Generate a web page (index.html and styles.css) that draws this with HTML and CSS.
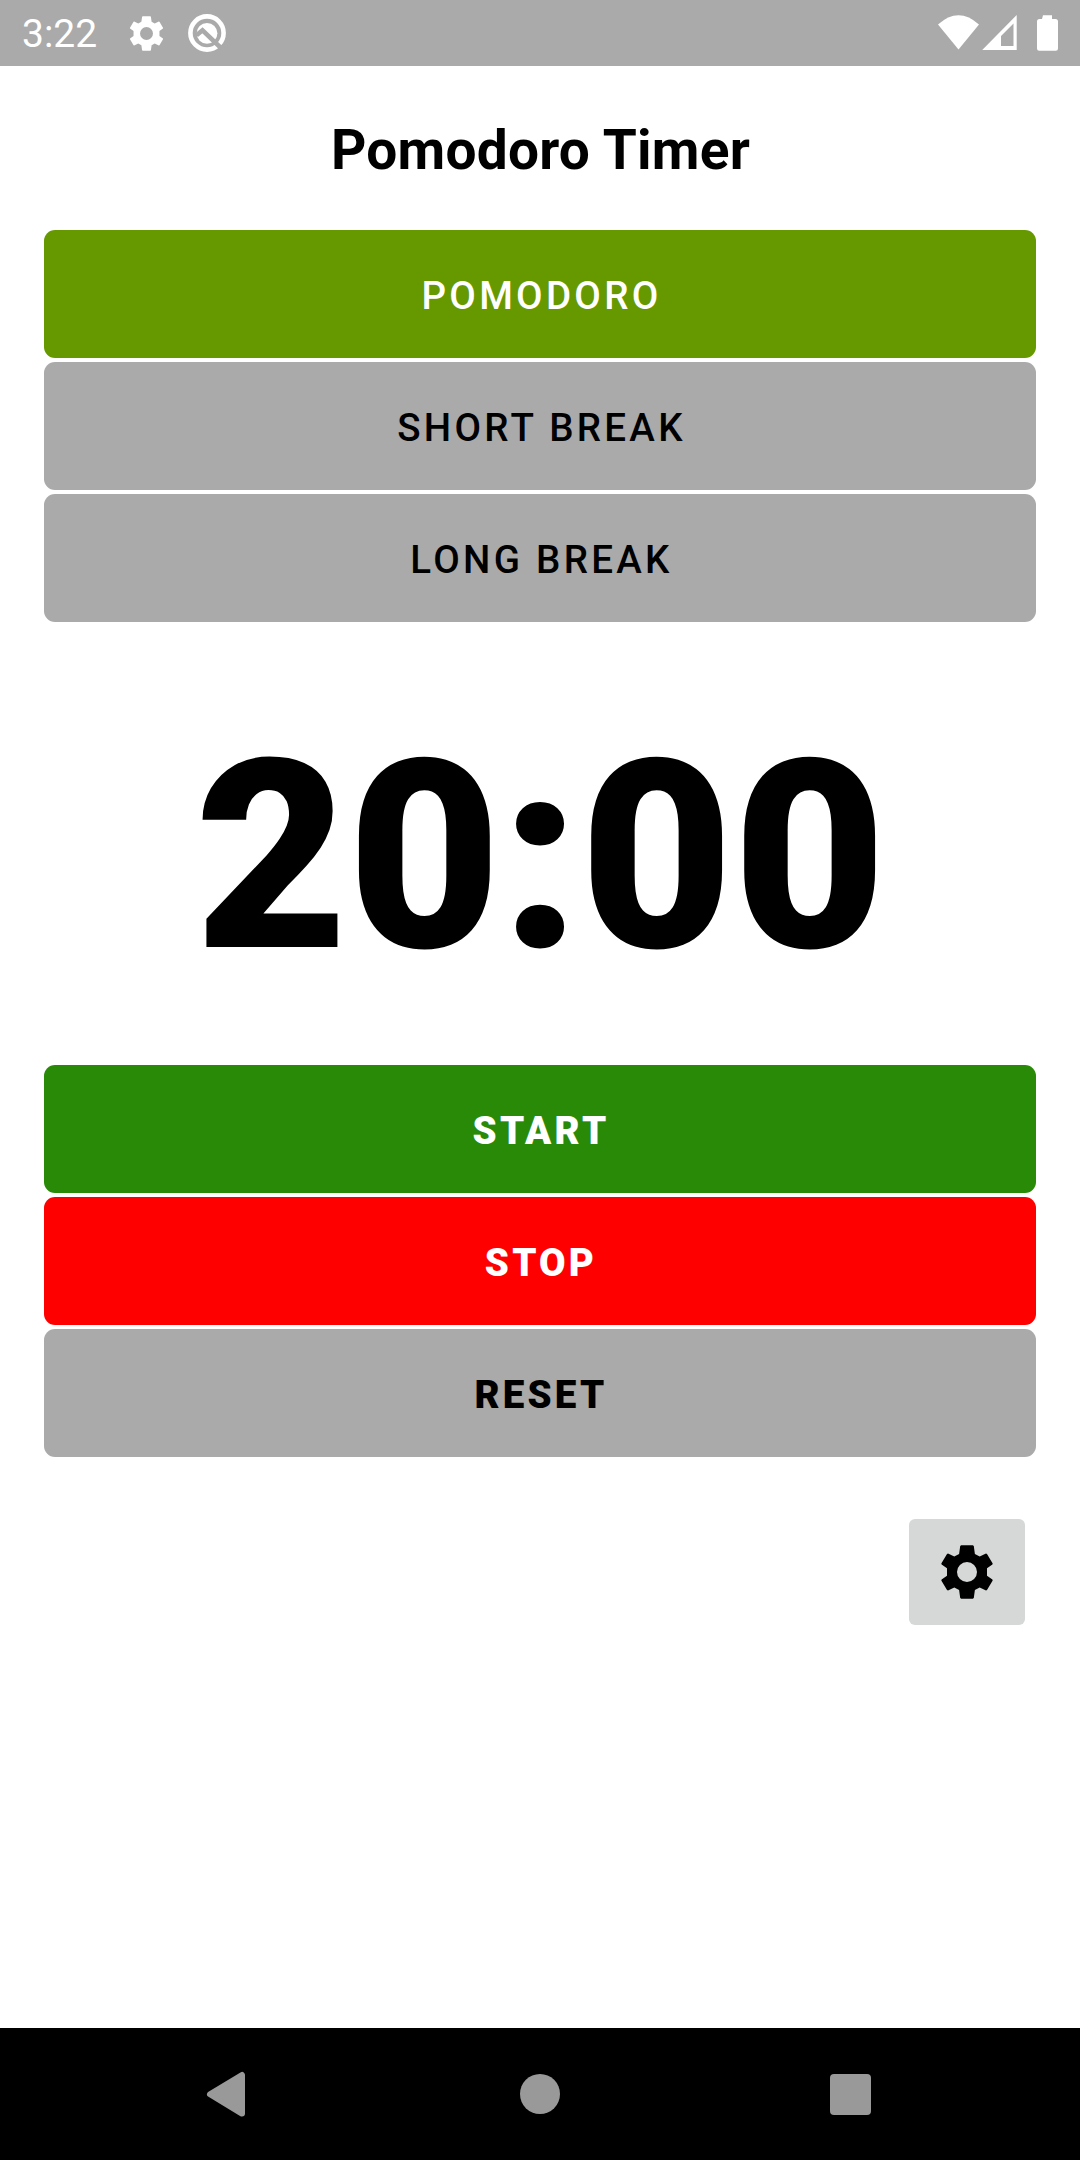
FILE: index.html
```html
<!DOCTYPE html>
<html lang="en">
<head>
<meta charset="utf-8">
<title>Pomodoro Timer</title>
<link rel="stylesheet" href="styles.css">
</head>
<body>
<svg class="defs" aria-hidden="true">
  <symbol id="gear" viewBox="-27 -27 54 54"><path fill-rule="evenodd" d="M-5.8-26.8H5.8L6.8-26 7.9-18 12.7-15.6 19-18.6 20-18 25.7-8.5 25.4-7.6 20-3.8V3.8L25.4 7.6 25.7 8.5 20 18 19 18.6 12.7 15.6 7.9 18 6.8 26 5.8 26.8H-5.8L-6.8 26-7.9 18-12.7 15.6-19 18.6-20 18-25.7 8.5-25.4 7.6-20 3.8V-3.8L-25.4-7.6-25.7-8.5-20-18-19-18.6-12.7-15.6-7.9-18-6.8-26zM10 0A10 10 0 1 0-10 0A10 10 0 1 0 10 0z"/></symbol>
</svg>
<header class="status">
  <span class="clock">3:22</span>
  <svg class="s-gear"><use href="#gear"/></svg>
  <svg class="s-app" viewBox="0 0 38 38"><circle class="ring" cx="19" cy="19" r="16.6"/><circle cx="19" cy="19.3" r="10.4"/><path class="cut" d="M8.500 21.300L14.500 16.300L33 34"/></svg>
  <svg class="s-right" viewBox="936 12 124 42"><path d="M938 24.5Q958.500 6 979 24.500L958.500 49.500z"/><path fill-rule="evenodd" d="M1016.700 15v35h-34.500zM1013.500 23.500L1001 36V46h12.500z"/><path d="M1043 15.300h9v3.700h3.500q2.500 0 2.500 2.500v27q0 2.200-2.200 2.200h-16.600q-2.200 0-2.200-2.200v-27q0-2.500 2.500-2.500h2.500z"/></svg>
</header>
<main class="screen">
  <h1 class="title">Pomodoro Timer</h1>
  <div class="group modes">
    <button class="btn active">POMODORO</button>
    <button class="btn">SHORT BREAK</button>
    <button class="btn">LONG BREAK</button>
  </div>
  <div class="time">20:00</div>
  <div class="group controls">
    <button class="btn start">START</button>
    <button class="btn stop">STOP</button>
    <button class="btn">RESET</button>
  </div>
  <button class="settings" aria-label="Settings"><svg><use href="#gear"/></svg></button>
</main>
<nav class="nav">
  <svg viewBox="-22 -22 44 44"><path class="back" d="M-20 .3L12-19V19.600z"/></svg>
  <svg viewBox="-22 -22 44 44"><circle r="20"/></svg>
  <svg viewBox="-22 -22 44 44"><rect x="-20" y="-20" width="41" height="41" rx="4"/></svg>
</nav>
</body>
</html>
```
FILE: styles.css
```css
*{box-sizing:border-box}
body{margin:0;height:2160px;display:flex;flex-direction:column;font-family:Roboto,sans-serif;background:#fff;color:#000}
.defs{display:none}
.status{height:66px;background:#aaa;display:flex;align-items:center;padding:0 20px 0 22px;fill:#fff;color:#fff}
.clock{font-size:39px;width:107px;padding-top:2px}
.s-gear{width:35px;height:35px}
.s-app{width:38px;height:38px;margin-left:24px}
.ring{fill:none;stroke:#fff;stroke-width:4.6}
.cut{fill:none;stroke:#aaa;stroke-width:4.5}
.s-right{width:124px;height:42px;margin-left:auto}
.screen{flex:1;display:flex;flex-direction:column;padding:0 44px}
.title{margin:52px 0 0;height:112px;padding-left:1px;line-height:64px;font-size:55px;font-weight:700;text-align:center;letter-spacing:.25px}
.group{display:flex;flex-direction:column;gap:4px}
.btn{height:128px;border:0;border-radius:11px;background:#aaa;color:#000;font:500 38.5px Roboto,sans-serif;letter-spacing:3.3px;padding:3px 0 0 3px}
.active{background:#690;color:#fff}
.time{height:443px;padding-left:1px;line-height:470px;font-size:264px;font-weight:900;text-align:center}
.controls .btn{font-weight:900;letter-spacing:3.2px;padding-left:2px}
.controls .start{background:#298a08;color:#fff}
.controls .stop{background:#f00;color:#fff}
.settings{align-self:flex-end;width:116px;height:106px;margin:62px 11px 0 0;padding:0;border:0;border-radius:6px;background:#d6d8d7;display:flex;align-items:center;justify-content:center}
.settings svg{width:54px;height:54px}
.nav{height:132px;background:#000;fill:#999;display:flex;align-items:center;justify-content:space-between;padding:0 208px}
.nav svg{width:44px;height:44px;overflow:visible}
.back{stroke:#999;stroke-width:6;stroke-linejoin:round}
```
